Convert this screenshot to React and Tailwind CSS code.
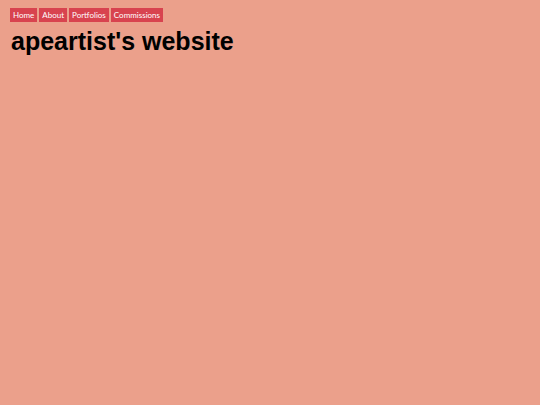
export default function App() {
  const items = ["Home", "About", "Portfolios", "Commissions"];
  return (
    <div className="w-[540px] h-[405px] bg-[#eba08b] pt-[8px] pl-[10px]">
      <nav className="flex gap-[2px]" style={{ fontFamily: "Lato, sans-serif" }}>
        {items.map((t) => (
          <span key={t} className="bg-[#d8434f] text-white text-[8px] leading-[14px] h-[14px] px-[3px]">{t}</span>
        ))}
      </nav>
      <h1 className="text-[25px] font-bold leading-[30px] mt-[4px] text-black ml-[1px]" style={{ fontFamily: "'Liberation Sans', Arial, sans-serif" }}>
        apeartist's website
      </h1>
    </div>
  );
}
